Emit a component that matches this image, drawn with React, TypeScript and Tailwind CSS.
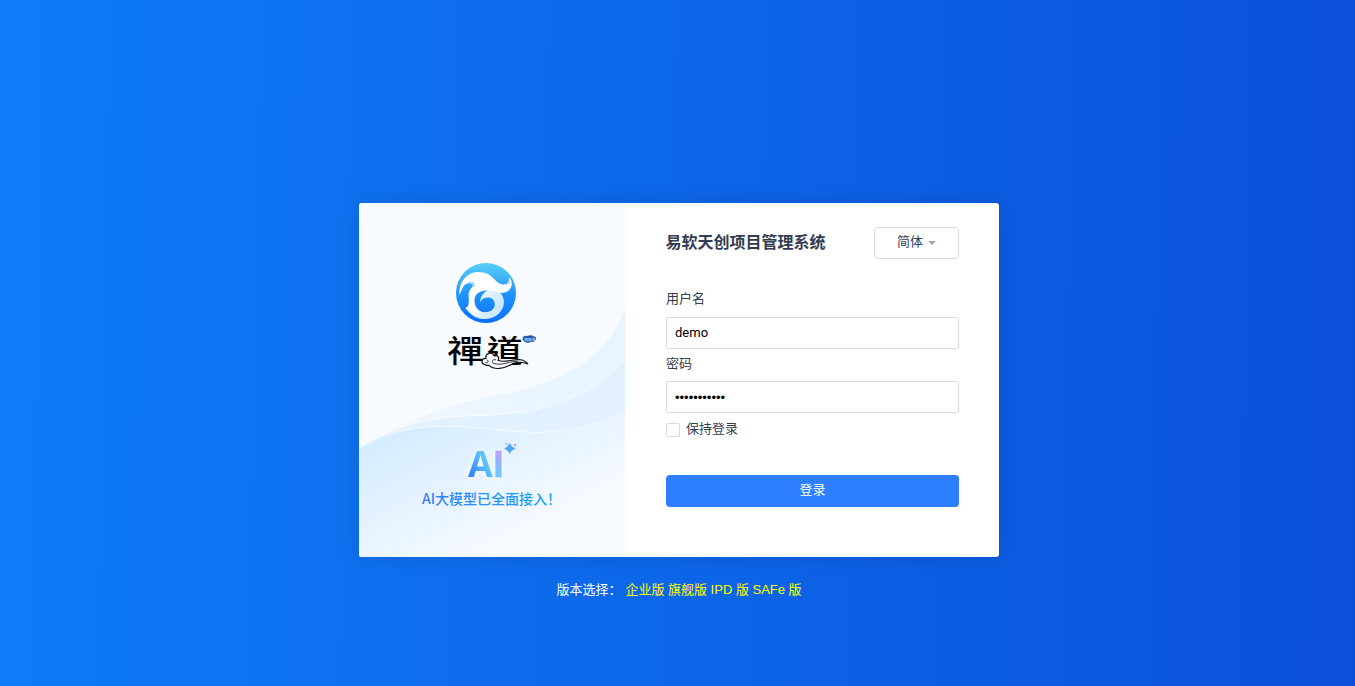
import { useState } from "react";

function Waves() {
  return (
    <svg viewBox="0 0 266 354" className="absolute inset-0 h-full w-full" aria-hidden="true">
      <defs>
        <linearGradient id="w1" x1="0" y1="0.6" x2="1" y2="0.2">
          <stop offset="0" stopColor="#f0f7ff" />
          <stop offset="1" stopColor="#e8f4ff" />
        </linearGradient>
        <linearGradient id="w2" x1="0" y1="0" x2="1" y2="0">
          <stop offset="0" stopColor="#e2f2ff" />
          <stop offset="1" stopColor="#e3f1ff" />
        </linearGradient>
        <linearGradient id="w3" gradientUnits="userSpaceOnUse" x1="60" y1="220" x2="125" y2="350">
          <stop offset="0" stopColor="#d6edff" />
          <stop offset="0.5" stopColor="#e6f3ff" />
          <stop offset="1" stopColor="#f7faff" />
        </linearGradient>
        <linearGradient id="line" gradientUnits="userSpaceOnUse" x1="0" y1="0" x2="266" y2="0">
          <stop offset="0" stopColor="#fff" stopOpacity="0.2" />
          <stop offset="0.5" stopColor="#fff" stopOpacity="0.8" />
          <stop offset="1" stopColor="#fff" stopOpacity="0.2" />
        </linearGradient>
      </defs>
      <path d="M0 246C38 222 80 204 124 194C165 187 190 180 220 163C246 146 262 122 266 102V354H0Z" fill="url(#w1)" />
      <path d="M0 246C35 222 65 216 108 213C150 211 170 210 205 198C235 187 253 173 266 158V354H0Z" fill="url(#w2)" />
      <path d="M0 246C30 228 60 223 101 223.500C135 226 155 229 178 229.500C215 228 242 220 266 207V354H0Z" fill="url(#w3)" />
      <g fill="none" stroke="url(#line)" strokeWidth="1">
        <path d="M0 246C38 222 80 204 124 194C165 187 190 180 220 163C246 146 262 122 266 102" />
        <path d="M24 233C50 218 75 215 108 213C150 211 170 210 205 198C235 187 253 173 266 158" />
        <path d="M24 233C48 225 70 222 101 223.500C135 226 155 229 178 229.500C215 228 242 220 266 207" />
        <path d="M78 282C115 272 145 292 204 276" strokeOpacity="0.5" />
      </g>
    </svg>
  );
}

function Logo() {
  return (
    <svg viewBox="0 0 345 360" className="h-[120px] w-[115px] overflow-visible" role="img" aria-label="禪道">
      <defs>
        <linearGradient id="disc" x1="0" y1="0" x2="0" y2="1">
          <stop offset="0" stopColor="#59cff8" />
          <stop offset="0.5" stopColor="#2196fa" />
          <stop offset="1" stopColor="#0b6dff" />
        </linearGradient>
        <linearGradient id="swirl" x1="0" y1="0.2" x2="1" y2="0.6">
          <stop offset="0" stopColor="#fff" />
          <stop offset="1" stopColor="#c4e6ff" />
        </linearGradient>
      </defs>
      <circle cx="153" cy="114" r="90" fill="url(#disc)" />
      <path d="M91 158C116 196 157 201 187 180C212 160 214 127 190 108C168 95 138 108 135 143C140 128 159 123 173 132C187 147 178 171 151 172C126 172 112 145 120 120L102 122C100 143 105 155 91 158Z" fill="url(#swirl)" />
      <path d="M73 120C70 82 96 52 127 51C176 50 177 86 205 89C224 88 222 72 222 66C239 84 229 112 202 114C180 110 168 102 146 107C124 109 114 129 119 149C122 161 128 168 138 175C109 172 95 158 103 143C100 119 97 108 116 92C114 85 104 82 95 86C82 92 81 106 73 120Z" fill="#fff" />
      <path d="M95 86C106 75 124 82 119 94L112 98C117 88 106 82 95 86Z" fill="#a5daff" />
      <path d="M222 66C229 78 224 91 207 92C223 88 219 73 222 66Z" fill="#a5daff" />
      <text
        transform="translate(37 322) scale(1 0.840)"
        fontSize="108"
        fontWeight="500"
        fontFamily="Noto Sans CJK TC, sans-serif"
        textLength="226"
      >
        禪道
      </text>
      <path d="M150 329C136 326 139 309 153 310C150 293 172 290 178 303C189 299 194 309 189 316C209 326 237 309 262 315Q272 319 279 327Q256 317 233 326C207 342 178 346 162 331Q155 332 150 329Z" fill="#f7fbff" stroke="#111" strokeWidth="3.500" />
      <path d="M151 323C160 326 163 315 155 315M183 315C175 311 168 319 175 325C202 334 227 317 249 319" fill="none" stroke="#111" strokeWidth="2.500" />
      <path d="M264 246Q270 241 277 243Q288 238 296 244Q307 247 302 254Q298 263 288 261Q278 266 270 261Q260 255 264 246Z" fill="#2058ad" />
      <text x="268" y="257" fontSize="11" fill="#dceaff" fontFamily="Noto Sans CJK SC, sans-serif">旗舰版</text>
    </svg>
  );
}

function AiMark() {
  return (
    <svg viewBox="0 0 155 80" className="h-[80px] w-[155px] overflow-visible" role="img" aria-label="AI">
      <defs>
        <linearGradient id="a" x1="0" y1="1" x2="1" y2="0">
          <stop offset="0.1" stopColor="#2c79ff" />
          <stop offset="0.6" stopColor="#5cc1ff" />
          <stop offset="1" stopColor="#79d0ff" />
        </linearGradient>
        <linearGradient id="i" x1="0" y1="1" x2="0" y2="0">
          <stop offset="0.2" stopColor="#65cdff" />
          <stop offset="0.8" stopColor="#c29dff" />
        </linearGradient>
        <linearGradient id="cap" x1="0" y1="0" x2="1" y2="0">
          <stop offset="0" stopColor="#3b7dff" />
          <stop offset="1" stopColor="#12a9fa" />
        </linearGradient>
        <filter id="glow" x="-30%" y="-30%" width="160%" height="160%">
          <feDropShadow dx="0" dy="0" stdDeviation="3" floodColor="#fff" floodOpacity="0.8" />
        </filter>
      </defs>
      <g filter="url(#glow)" fontFamily="Open Sans, sans-serif" fontWeight="700" fontSize="36">
        <text x="58" y="42" fill="url(#a)">A</text>
        <text x="82.500" y="42" fill="url(#i)" stroke="url(#i)" strokeWidth="0.500">I</text>
      </g>
      <path d="M99.700 8.500Q101 12 105 13.500Q101 15 99.700 18.500Q98.500 15 94.500 13.500Q98.500 12 99.700 8.500Z" fill="#4aa4f7" stroke="#4aa4f7" strokeWidth="0.600" />
      <circle cx="96.500" cy="9" r="1" fill="#6fc3fb" />
      <circle cx="105" cy="10" r="1.200" fill="#b1a0fa" />
      <text x="12" y="69" fontSize="14" fontWeight="500" fontFamily="Noto Sans CJK SC, sans-serif" fill="url(#cap)">
        AI大模型已全面接入！
      </text>
    </svg>
  );
}

const versions = ["企业版", "旗舰版", "IPD 版", "SAFe 版"];

export default function App() {
  const [user, setUser] = useState("demo");
  const [password, setPassword] = useState("12345678901");
  const [keep, setKeep] = useState(false);
  return (
    <main className="flex h-[686px] flex-col items-center bg-[linear-gradient(91deg,#0f7cf7_0%,#0b50da_100%)] pt-[203px] pl-[3px] font-['Liberation_Sans','Noto_Sans_CJK_SC',sans-serif] text-[13px] leading-5 text-[#313c52]">
      <section className="flex h-[354px] w-[640px] shrink-0 overflow-hidden rounded-[3px] bg-white shadow-[0_0_20px_rgba(0,0,0,0.12)]">
        <div className="relative w-[266px] shrink-0 bg-[#f7fbff]">
          <Waves />
          <div className="relative pt-[52px] pl-[76px]">
            <Logo />
          </div>
          <div className="relative pt-[60px] pl-[51px]">
            <AiMark />
          </div>
        </div>
        <form className="flex flex-1 flex-col pt-6 pr-10 pl-[41px]" onSubmit={(e) => e.preventDefault()}>
          <header className="flex h-8 items-center justify-between">
            <h1 className="-ml-[0.5px] text-[16px] font-bold">易软天创项目管理系统</h1>
            <button type="button" className="flex h-8 w-[85px] items-center justify-center gap-[5px] rounded-[4px] border border-[#d8dbde] pb-0.5">
              简体
              <span className="mt-0.5 border-x-4 border-t-4 border-x-transparent border-t-[#9ea3b0]" />
            </button>
          </header>
          <label htmlFor="user" className="mt-[30px] h-5">用户名</label>
          <input id="user" value={user} onChange={(e) => setUser(e.target.value)} className="mt-2 h-8 rounded-[2px] border border-[#d8dbde] px-2 pb-0.5 font-['Roboto',sans-serif] text-black outline-none" />
          <label htmlFor="password" className="mt-[5px] h-5">密码</label>
          <input id="password" type="password" value={password} onChange={(e) => setPassword(e.target.value)} className="mt-[7px] h-8 rounded-[2px] border border-[#d8dbde] px-2 text-black outline-none" />
          <label className="mt-[6px] flex h-5 items-center gap-[6px]">
            <input type="checkbox" checked={keep} onChange={(e) => setKeep(e.target.checked)} className="mt-0.5 size-[14px] appearance-none rounded-[2px] border border-[#d8dbde] checked:bg-[#2e7fff]" />
            保持登录
          </label>
          <button type="submit" className="mt-9 h-8 rounded-[4px] bg-[#2e7fff] pb-0.5 text-white">登录</button>
        </form>
      </section>
      <footer className="mt-[23px] flex text-white">
        <span className="w-[69px]">版本选择：</span>
        <nav className="flex gap-[3.6px] text-[#ffff00]">
          {versions.map((v) => <a key={v} href="#">{v}</a>)}
        </nav>
      </footer>
    </main>
  );
}
